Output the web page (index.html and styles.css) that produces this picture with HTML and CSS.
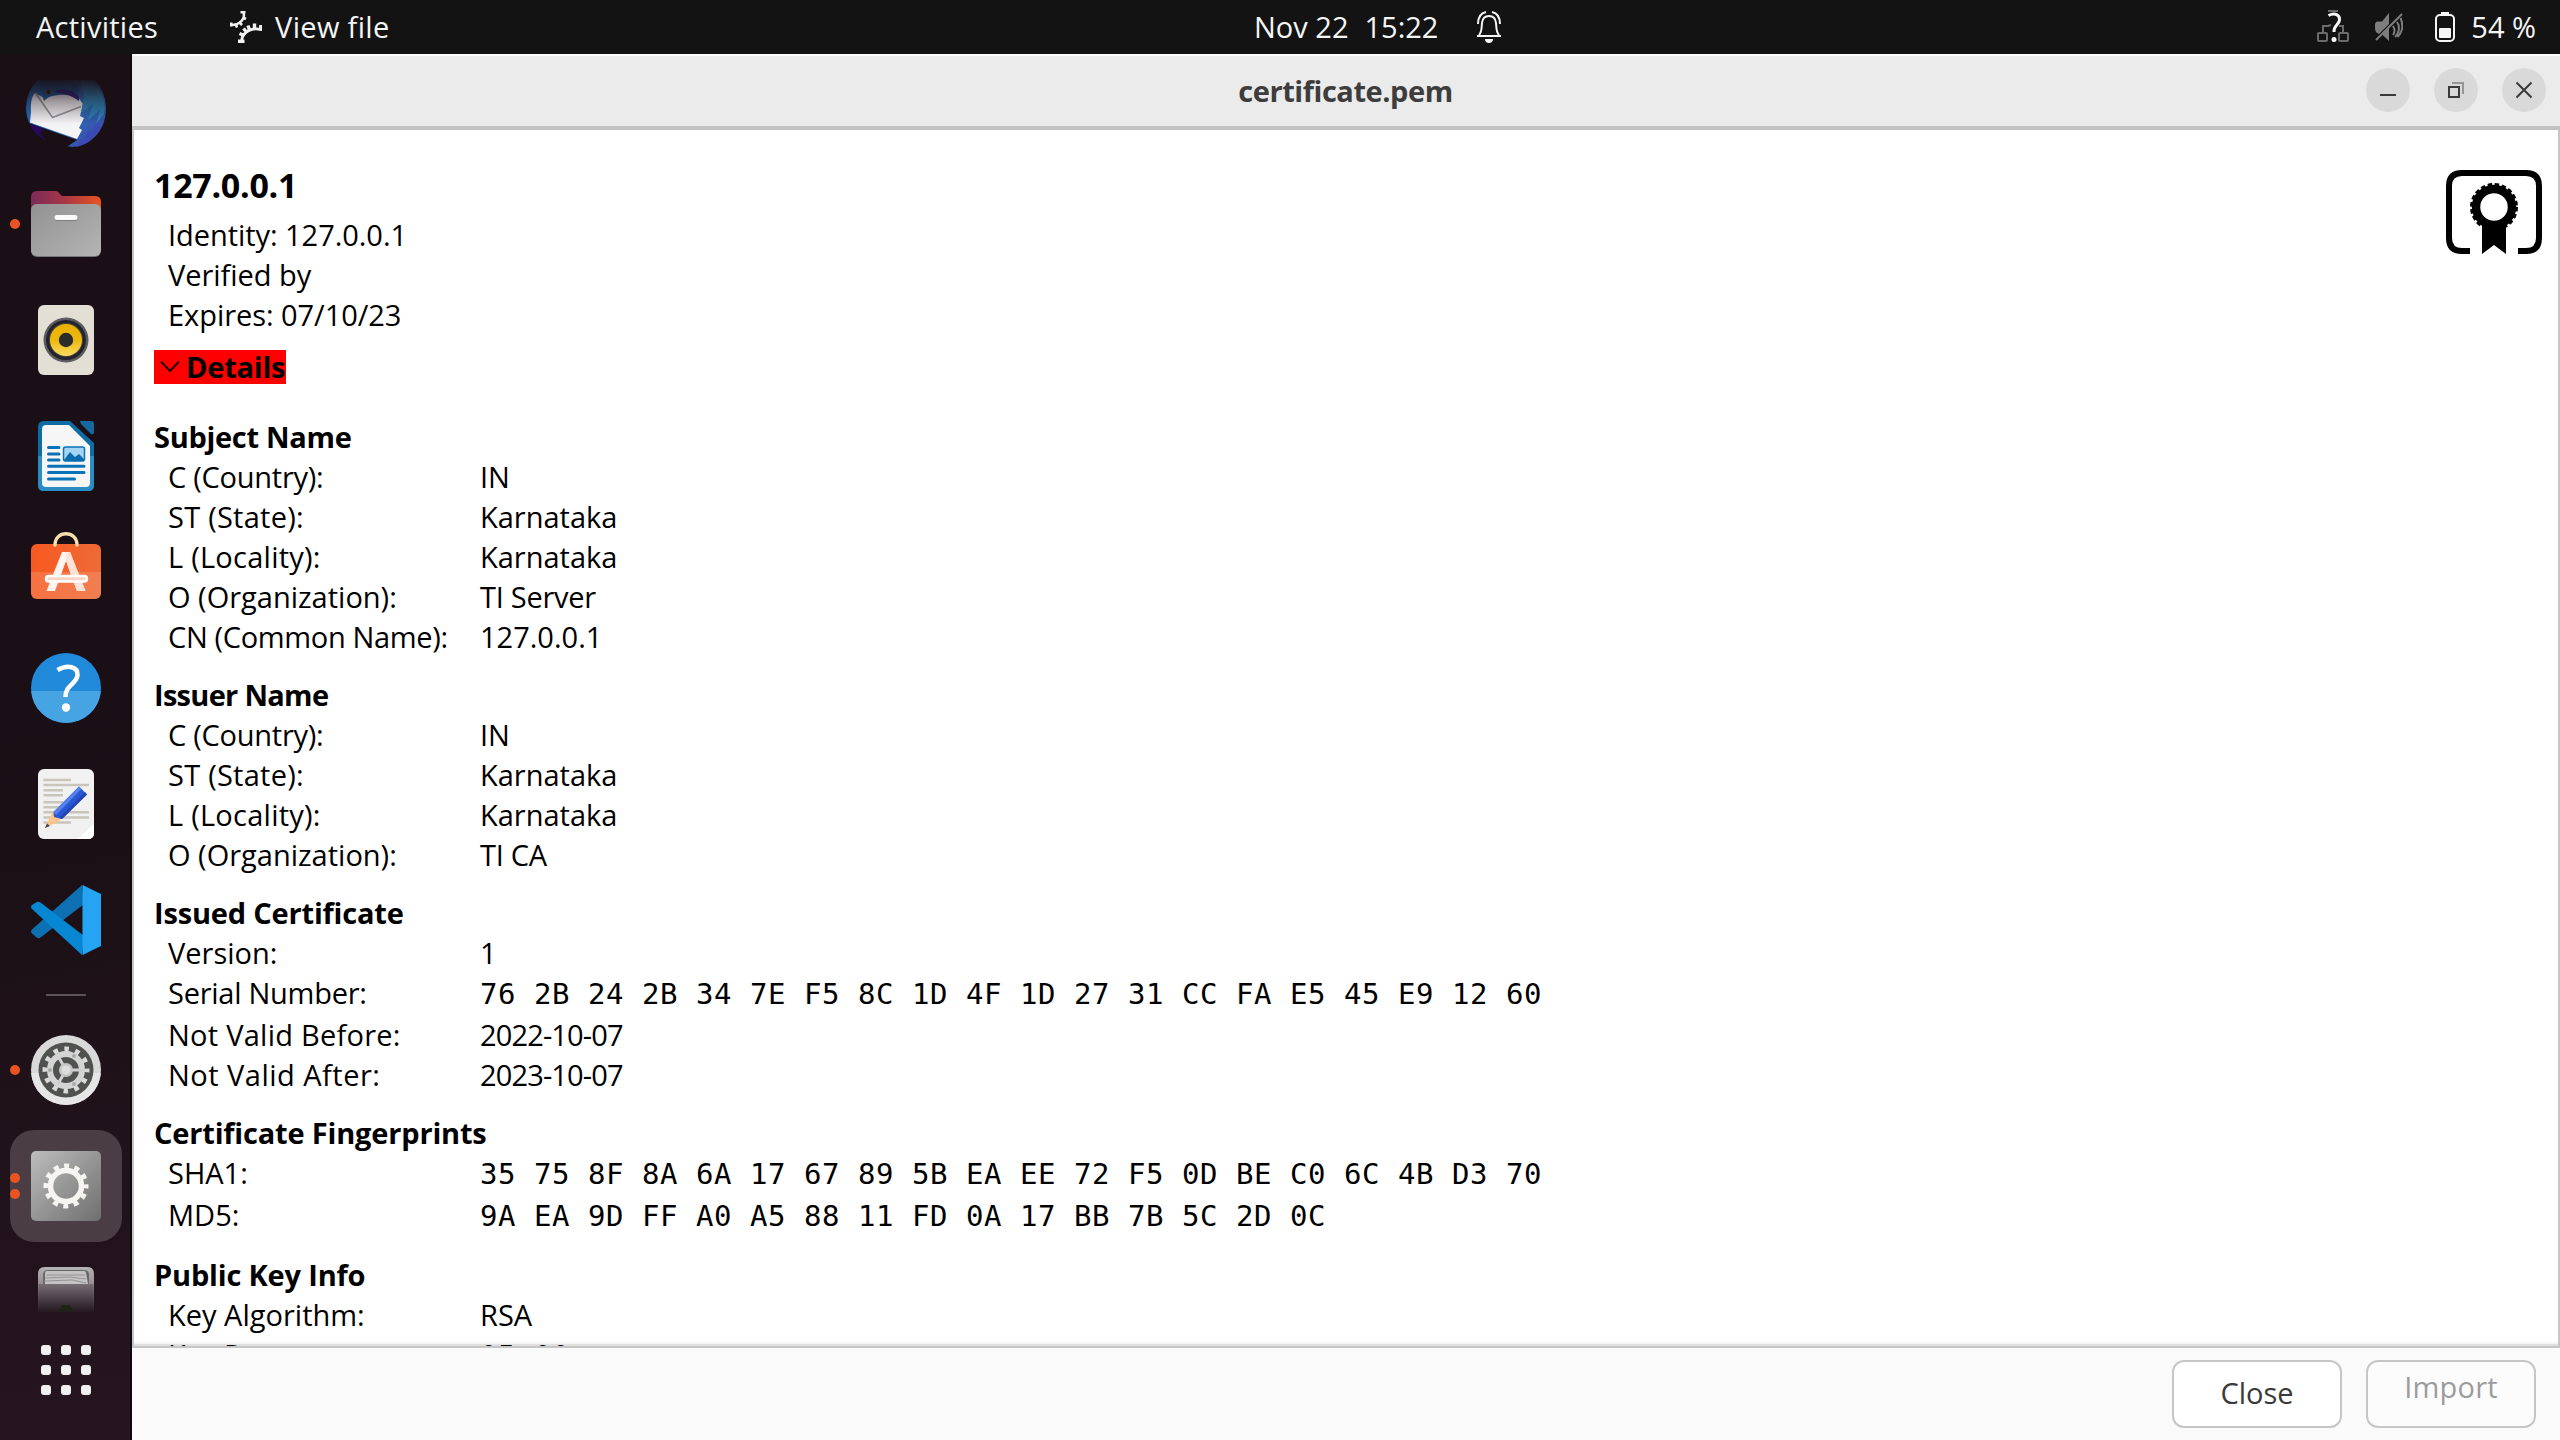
FILE: index.html
```html
<!DOCTYPE html>
<html lang="en">
<head>
<meta charset="utf-8">
<title>certificate.pem</title>
<link rel="stylesheet" href="styles.css">
</head>
<body>
<header class="topbar">
  <div class="topbar-left">
    <span class="activities">Activities</span>
    <svg class="app-gears" width="32" height="32" viewBox="0 0 32 32" fill="none" stroke="#f2f2f2">
      <path d="M13.500 1C15.500 8 10 14 1 14" stroke-width="2.400"/>
      <path d="M10.500 1.300H15.500M13 6.500L16 8M9 11L12 14M5.500 12.500L7 16.500M1.200 11.500V15.500" stroke-width="2.600"/>
      <path d="M11.500 30.500C12 23 18 18 26 17.800L32 18.500" stroke-width="2.800"/>
      <path d="M8 30.200H14.500M9.500 22.500L14 24.500M13.500 17.500L17 21.500M18 14.500L19.500 19M24.500 12.500V18M30.800 14V19.500" stroke-width="3.400"/>
    </svg>
    <span class="app-name">View file</span>
  </div>
  <div class="topbar-clock">
    <span>Nov 22</span><span class="time">15:22</span>
    <svg width="24" height="32" viewBox="0 0 24 32" fill="none" stroke="#f5f5f5" stroke-width="2">
      <path d="M2 24C5 21 4.500 17 5 12C5.500 7 8 5 12 5C16 5 18.500 7 19 12C19.500 17 19 21 22 24"/>
      <path d="M0 25h24"/>
      <path d="M9 1C4 2 1 6 1 13M15 1C20 2 23 6 23 13"/>
      <path d="M8 28h8c0 2.500-1.500 4-4 4s-4-1.500-4-4z" fill="#f5f5f5" stroke="none"/>
    </svg>
  </div>
  <div class="topbar-status">
    <svg width="32" height="34" viewBox="0 0 32 34" fill="none">
      <g stroke="#6b6b6b" stroke-width="2">
        <rect x="1" y="23" width="9" height="8" rx="1"/><rect x="22" y="23" width="9" height="8" rx="1"/>
        <path d="M6 22v-6h5l3-1M26 22v-6h-4M11 1h10"/>
      </g>
      <path d="M11.500 5.500C18 2 23 5 22.500 10C22 15 16.500 15 17 22" stroke="#f5f5f5" stroke-width="3"/>
      <circle cx="17" cy="29.500" r="2.500" fill="#f5f5f5"/>
    </svg>
    <svg class="volume" width="28" height="28" viewBox="0 0 28 28" fill="none" stroke="#7d7d7d" stroke-width="2">
      <path d="M0 12c0-2 1-3.500 3-3.500h4L14 0v11L4 21C1 20 0 18 0 15z" fill="#7d7d7d" stroke="none"/>
      <path d="M7 21.500l7-7V28z" fill="#7d7d7d" stroke="none"/>
      <path d="M1 27L27 1M18 13c2 3 2 6 0 9M22 9c3 4 2.500 11-2 15M25.500 5c3 7 2 14-3 19"/>
    </svg>
    <svg class="battery" width="20" height="30" viewBox="0 0 20 30" fill="none">
      <rect x="1" y="3" width="18" height="26" rx="4" stroke="#f5f5f5" stroke-width="2"/>
      <rect x="6" y="0" width="8" height="3" fill="#f5f5f5"/>
      <rect x="4" y="16" width="12" height="10" rx="1" fill="#f5f5f5"/>
    </svg>
    <span>54 %</span>
  </div>
</header>

<div class="desktop">
  <nav class="dock">
    <div class="dock-list">
      <div class="dock-item">
        <svg width="112" height="112" viewBox="0 0 112 112">
          <defs>
            <linearGradient id="tbBlue" x1="0" y1="0" x2="1" y2="1"><stop offset="0" stop-color="#1d63ad"/><stop offset=".6" stop-color="#2b6db8"/><stop offset="1" stop-color="#3f3fa5"/></linearGradient>
            <linearGradient id="tbFade" x1="0" y1="28" x2="0" y2="72" gradientUnits="userSpaceOnUse"><stop offset="0" stop-color="#1a0f15" stop-opacity=".92"/><stop offset=".5" stop-color="#1a0f15" stop-opacity=".38"/><stop offset="1" stop-color="#1a0f15" stop-opacity="0"/></linearGradient>
            <clipPath id="tbClip"><rect x="10" y="28" width="92" height="70"/></clipPath>
          </defs>
          <g clip-path="url(#tbClip)">
            <path d="M16 56A40 40 0 0 1 96 56C96 76 84 93 62 95L57 94L67 88L20 72L36 88C24 82 16 70 16 56z" fill="url(#tbBlue)"/>
            <path d="M19 71L58 85L67 88L58 94L34 84L36 88C28 84 22 79 19 71z" fill="#1a0f15"/>
            <path d="M20 72L34 77L30 81L36 88C28 84 22 79 20 72z" fill="#28085e"/>
            <path d="M25 41C20 46 21 56 21 60L20 70.500L67 87L72 78L69 76L74 66L70 64L73 52L68 45C56 41 45 43 34 46z" fill="#f4f3f5"/>
            <path d="M25.500 41L42.500 65.500L71 54.500" fill="none" stroke="#98979b" stroke-width="1.600"/>
            <path d="M31 28C29 36 32 42 34 49C42 41 55 39 69 45L68 34L56 26z" fill="#1d5c9e"/>
            <path d="M44 40C52 35 62 37 69 45L69 49C60 42 52 42 44 40z" fill="#33228a"/>
            <path d="M72 36C77 46 70 56 72 60L83 52L78 68L90 58L86 72L94 62C98 44 86 30 72 28z" fill="#2e84ba"/>
            <path d="M66 95L70 87L74 88L78 79L81 81L86 72C90 68 92 74 88 80C82 89 75 93 66 95z" fill="#3b49b4"/>
            <circle cx="38.500" cy="40" r="2.400" fill="#23150f" stroke="#65503f"/>
            <rect x="10" y="14" width="92" height="60" fill="url(#tbFade)"/>
          </g>
        </svg>
      </div>
      <div class="dock-item running">
        <svg width="112" height="112" viewBox="0 0 112 112">
          <defs>
            <linearGradient id="fBack"><stop offset="0" stop-color="#7c2a57"/><stop offset=".45" stop-color="#a33648"/><stop offset="1" stop-color="#e95420"/></linearGradient>
            <linearGradient id="fFront" x1="0" y1="0" x2="1" y2="1"><stop offset="0" stop-color="#929292"/><stop offset="1" stop-color="#b4b4b4"/></linearGradient>
          </defs>
          <path d="M21 46V29q0-6 6-6H46q2 0 3 2l3 3H85q6 0 6 6V46z" fill="url(#fBack)"/>
          <rect x="21" y="36" width="70" height="53" rx="6" fill="#777"/>
          <rect x="21" y="36" width="70" height="52" rx="6" fill="url(#fFront)"/>
          <rect x="44.500" y="48" width="23" height="5" rx="2.500" fill="#7c7c7c"/>
          <rect x="44.500" y="47" width="23" height="5" rx="2.500" fill="#fafafa"/>
        </svg>
      </div>
      <div class="dock-item">
        <svg width="112" height="112" viewBox="0 0 112 112">
          <defs><linearGradient id="rY" x1="0" y1="0" x2="0" y2="1"><stop offset="0" stop-color="#e9b000"/><stop offset=".5" stop-color="#edb90f"/><stop offset="1" stop-color="#f9db62"/></linearGradient></defs>
          <rect x="28" y="21" width="56" height="70" rx="6" fill="#e3dfd5"/>
          <circle cx="56" cy="56" r="22.500" fill="#5c5c5e"/>
          <circle cx="56" cy="56" r="20" fill="#23232f"/>
          <circle cx="56" cy="56" r="17" fill="#4c483a"/>
          <circle cx="56" cy="56" r="16" fill="url(#rY)"/>
          <circle cx="56" cy="56" r="7.200" fill="#2b2b2b"/>
        </svg>
      </div>
      <div class="dock-item">
        <svg width="112" height="112" viewBox="0 0 112 112">
          <path d="M28 27q0-6 6-6H60L84 43V85q0 6-6 6H34q-6 0-6-6z" fill="#0e6ca5"/>
          <path d="M28 56H84V85q0 6-6 6H34q-6 0-6-6z" fill="#2b8cc4"/>
          <path d="M70 21H81q3 0 3 3V33q-1 2-3 1L71 24z" fill="#15699e"/>
          <path d="M32 29q0-4 4-4H59L80 46V83q0 4-4 4H36q-4 0-4-4z" fill="#f6f6f6"/>
          <g stroke="#0a73b7" stroke-width="3" stroke-linecap="round"><path d="M38.500 47.500H49M38.500 54H49M38.500 60H49M38.500 66.300H74M38.500 72.500H74M38.500 79H64.500"/></g>
          <rect x="53.500" y="47" width="21" height="14" rx="2" fill="#a3d4f2" stroke="#0a73b7" stroke-width="1.500"/>
          <path d="M54 60L60 52L65 57L69 54L74 59V61H54z" fill="#0a6cae"/>
        </svg>
      </div>
      <div class="dock-item">
        <svg width="112" height="112" viewBox="0 0 112 112">
          <defs><linearGradient id="sO" x1="0" y1="0" x2="1" y2="0"><stop offset="0" stop-color="#f75a22"/><stop offset="1" stop-color="#ee6a35"/></linearGradient></defs>
          <rect x="21" y="28" width="70" height="55" rx="6" fill="url(#sO)"/>
          <path d="M21 56H91V77q0 6-6 6H27q-6 0-6-6z" fill="#fff" fill-opacity=".14"/>
          <path d="M45 29C45 14 67 14 67 29" fill="none" stroke="#f8dfae" stroke-width="3.400" stroke-linecap="round"/>
          <path d="M52 36H60L75.500 75H67L56 45L45 75H36.500z" fill="#fff5ee"/>
          <path d="M56 36H60L75.500 75H67L56 45z" fill="#fde3d6"/>
          <rect x="36" y="60" width="41" height="5.500" rx="2.700" fill="#fbd5c4" stroke="#fff" stroke-width="2.400"/>
        </svg>
      </div>
      <div class="dock-item">
        <svg width="112" height="112" viewBox="0 0 112 112">
          <circle cx="56" cy="56" r="35" fill="#2189da"/>
          <path d="M21.130 59H90.870A35 35 0 0 1 21.130 59z" fill="#46a4e2"/>
          <path d="M47.500 38C58 32 68 35 67.500 43C67 52 55 53 55.500 65" fill="none" stroke="#fff" stroke-width="4.500"/>
          <circle cx="56" cy="75.500" r="4.200" fill="#fff"/>
        </svg>
      </div>
      <div class="dock-item">
        <svg width="112" height="112" viewBox="0 0 112 112">
          <rect x="28" y="21" width="56" height="70" rx="6" fill="#f1f1f2"/>
          <path d="M84 76V85q0 6-6 6H68z" fill="#fff"/>
          <g stroke="#c9c5ba" stroke-width="2.500"><path d="M33.500 32H61M33.500 37H79M33.500 42.300H53M33.500 47.300H53M33.500 54.300H53M33.500 59.300H50M33.500 64.300H79M33.500 69.500H79M33.500 74.500H61"/></g>
          <path d="M35 80L42 65L44 63L51 70L49 73z" fill="#ffc389"/>
          <path d="M35 80L37 75.500L40 78z" fill="#4a4a4a"/>
          <path d="M69 38.500L77 46.500L52 71L44 69L43.500 64z" fill="#2857d4"/>
          <path d="M69 38.500L71.500 41L46 67L43.500 64z" fill="#5581ec"/>
          <path d="M75 44L77 46.500L52 71L49 70z" fill="#2146b4"/>
        </svg>
      </div>
      <div class="dock-item">
        <svg width="112" height="112" viewBox="0 0 112 112">
          <path d="M72 21L74 40L30.500 73.500Q28 75 26 73L22 69.500Q20 67.500 22 65.500z" fill="#0c70b3"/>
          <path d="M22 45Q20 43 22 41L26 38.500Q28 37 30.500 38.500L74 72L72 91z" fill="#0787d2"/>
          <path d="M72.500 21L91 30V82L72.500 91z" fill="#24a4f2"/>
        </svg>
      </div>
      <hr class="dock-separator">
      <div class="dock-item running">
        <svg width="112" height="112" viewBox="0 0 112 112">
          <circle cx="56" cy="56" r="35" fill="#d9d9d9"/>
          <path d="M21.130 59H90.870A35 35 0 0 1 21.130 59z" fill="#e6e6e6"/>
          <circle cx="56" cy="56" r="27.500" fill="#505250"/>
          <circle cx="56" cy="56" r="21" fill="none" stroke="#dadada" stroke-width="5" stroke-dasharray="4.600 6.396" stroke-dashoffset="2.300"/>
          <circle cx="56" cy="56" r="16" fill="none" stroke="#d4d4d4" stroke-width="6"/>
          <path d="M56 56H73M56 56L47.500 41.300M56 56L47.500 70.700" stroke="#d0d0d0" stroke-width="3"/>
          <circle cx="56" cy="56" r="7" fill="#c6c6c6"/>
          <g fill="#aaa"><circle cx="56" cy="56" r="4.500" fill="#dedede"/><circle cx="40" cy="56" r="2"/><circle cx="64" cy="42" r="2"/><circle cx="64" cy="70" r="2"/></g>
        </svg>
      </div>
      <div class="dock-item active">
        <svg width="112" height="112" viewBox="0 0 112 112">
          <defs><linearGradient id="gG" x1="0" y1="0" x2="1" y2="1"><stop offset="0" stop-color="#bdbdbd"/><stop offset="1" stop-color="#6f6f6f"/></linearGradient></defs>
          <rect x="21" y="21" width="70" height="70" rx="5" fill="url(#gG)"/>
          <circle cx="56" cy="56" r="15.500" fill="none" stroke="#f6f5f2" stroke-width="5.500"/>
          <circle cx="56" cy="56" r="20" fill="none" stroke="#f6f5f2" stroke-width="5" stroke-dasharray="5 5.472" stroke-dashoffset="2.500"/>
        </svg>
      </div>
      <div class="dock-item">
        <svg width="112" height="112" viewBox="0 0 112 112">
          <defs>
            <linearGradient id="trF" x1="0" y1="38" x2="0" y2="66" gradientUnits="userSpaceOnUse"><stop offset="0" stop-color="#766c72"/><stop offset="1" stop-color="#251820"/></linearGradient>
            <linearGradient id="trB" x1="0" y1="21" x2="0" y2="66" gradientUnits="userSpaceOnUse"><stop offset="0" stop-color="#b5b3b4"/><stop offset=".4" stop-color="#948c90"/><stop offset="1" stop-color="#251820"/></linearGradient>
          </defs>
          <path d="M28 66V28q0-7 7-7H77q7 0 7 7V66z" fill="url(#trB)"/>
          <path d="M33 38V29q0-5 5-5H74q5 0 5 5V38z" fill="#69676a"/>
          <path d="M35 38V27q0-2 2-2H74q2 0 2 2l2 11z" fill="#c4c2c3"/>
          <path d="M36 29L75 29M35 32L60 31L76 33M34 35L62 34L76 37" fill="none" stroke="#969496"/>
          <rect x="28.500" y="38" width="55" height="28" fill="url(#trF)"/>
          <path d="M52 59h8l2 4l1 3h-5l-2-3l-2 3h-5l1-3z" fill="#1e2318"/>
        </svg>
      </div>
    </div>
    <div class="app-grid"><i></i><i></i><i></i><i></i><i></i><i></i><i></i><i></i><i></i></div>
  </nav>

  <main class="window">
    <header class="titlebar">
      <h1 class="window-title">certificate.pem</h1>
      <div class="window-controls">
        <svg width="44" height="44" viewBox="0 0 44 44"><circle cx="22" cy="22" r="22"/><path d="M14 27H30"/></svg>
        <svg width="44" height="44" viewBox="0 0 44 44"><circle cx="22" cy="22" r="22"/><path d="M18 15H29V26" class="back"/><rect x="15" y="19" width="10" height="10"/></svg>
        <svg width="44" height="44" viewBox="0 0 44 44"><circle cx="22" cy="22" r="22"/><path d="M14.500 14.500L29.500 29.500M29.500 14.500L14.500 29.500"/></svg>
      </div>
    </header>

    <section class="viewer">
      <div class="certificate">
        <h2 class="cert-name">127.0.0.1</h2>
        <p class="summary">Identity: 127.0.0.1</p>
        <p class="summary">Verified by</p>
        <p class="summary">Expires: 07/10/23</p>
        <div class="details-toggle">
          <svg width="20" height="14" viewBox="0 0 20 14"><path d="M1 1.500L10 11L19 1.500" fill="none" stroke="#200" stroke-width="2"/></svg>
          <span>Details</span>
        </div>

        <section class="group">
          <h3>Subject Name</h3>
          <dl>
            <dt class="snug">C (Country):</dt><dd>IN</dd>
            <dt class="loose">ST (State):</dt><dd>Karnataka</dd>
            <dt class="loose">L (Locality):</dt><dd>Karnataka</dd>
            <dt>O (Organization):</dt><dd class="snug">TI Server</dd>
            <dt class="snugger">CN (Common Name):</dt><dd>127.0.0.1</dd>
          </dl>
        </section>
        <section class="group">
          <h3 class="tight">Issuer Name</h3>
          <dl>
            <dt class="snug">C (Country):</dt><dd>IN</dd>
            <dt class="loose">ST (State):</dt><dd>Karnataka</dd>
            <dt class="loose">L (Locality):</dt><dd>Karnataka</dd>
            <dt>O (Organization):</dt><dd class="snug">TI CA</dd>
          </dl>
        </section>
        <section class="group">
          <h3 class="wide">Issued Certificate</h3>
          <dl>
            <dt>Version:</dt><dd>1</dd>
            <dt class="snug">Serial Number:</dt><dd class="hex">76 2B 24 2B 34 7E F5 8C 1D 4F 1D 27 31 CC FA E5 45 E9 12 60</dd>
            <dt class="loose">Not Valid Before:</dt><dd class="date">2022-10-07</dd>
            <dt class="looser">Not Valid After:</dt><dd class="date">2023-10-07</dd>
          </dl>
        </section>
        <section class="group">
          <h3 class="wide">Certificate Fingerprints</h3>
          <dl>
            <dt>SHA1:</dt><dd class="hex">35 75 8F 8A 6A 17 67 89 5B EA EE 72 F5 0D BE C0 6C 4B D3 70</dd>
            <dt>MD5:</dt><dd class="hex">9A EA 9D FF A0 A5 88 11 FD 0A 17 BB 7B 5C 2D 0C</dd>
          </dl>
        </section>
        <section class="group">
          <h3 class="wide">Public Key Info</h3>
          <dl>
            <dt>Key Algorithm:</dt><dd>RSA</dd>
            <dt>Key Parameters:</dt><dd class="hex">05 00</dd>
          </dl>
        </section>
      </div>
      <svg class="cert-icon" width="96" height="84" viewBox="0 0 96 84">
        <path d="M24 81H16Q3 81 3 68V16Q3 3 16 3H80Q93 3 93 16V68Q93 81 80 81H72" fill="none" stroke="#000" stroke-width="6"/>
        <circle cx="48" cy="37" r="18" fill="none" stroke="#000" stroke-width="8.500"/>
        <circle cx="48" cy="37" r="22.500" fill="none" stroke="#000" stroke-width="3" stroke-dasharray="4.500 2.569"/>
        <path d="M36 54H60V84L48 75L36 84z"/>
      </svg>
      <div class="scroll-shade"></div>
    </section>

    <footer class="actions">
      <button class="button">Close</button>
      <button class="button disabled" disabled>Import</button>
    </footer>
  </main>
</div>
</body>
</html>
```
FILE: styles.css
```css
* { box-sizing: border-box; }
body {
  margin: 0;
  width: 2560px;
  height: 1440px;
  overflow: hidden;
  display: flex;
  flex-direction: column;
  font: 29px/40px "Open Sans", "Noto Sans", sans-serif;
  color: #000;
  background: #1a0f15;
}
h1, h2, h3, p, dl, dd { margin: 0; }
svg { display: block; flex: none; }

/* Top panel */
.topbar {
  height: 54px;
  flex: none;
  display: grid;
  grid-template-columns: 1255px 1fr auto;
  background: #131313;
  color: #f5f5f5;
  line-height: 54px;
}
.topbar-left, .topbar-clock, .topbar-status { display: flex; align-items: center; }
.topbar-left { padding-left: 36px; }
.activities { width: 194px; letter-spacing: 0.26px; }
.app-name { margin-left: 13px; letter-spacing: 0.34px; }
.time { margin: 0 39px 0 16px; }
.topbar-clock > span:first-child { margin-left: -1px; }
.topbar-status { padding-right: 24px; }
.volume { margin-left: 26px; }
.battery { margin: 0 16px 0 32px; }

.desktop { flex: 1; display: flex; min-height: 0; }

/* Dock */
.dock {
  width: 132px;
  flex: none;
  display: flex;
  flex-direction: column;
  background: linear-gradient(170deg, #190f15 0%, #1b0f16 55%, #1f1219 75%, #26151f 100%);
  border-right: 2px solid #0f080c;
}
.dock-list { height: 1262px; overflow: hidden; padding-left: 10px; }
.dock-item {
  position: relative;
  width: 112px;
  height: 112px;
  margin-bottom: 4px;
}
.dock-item:first-child { margin-top: -2px; }
.running::before, .active::before, .active::after {
  content: "";
  position: absolute;
  left: 0;
  top: 51px;
  width: 10px;
  height: 10px;
  border-radius: 50%;
  background: #e95420;
}
.active { background: #4a3e44; border-radius: 24px; }
.active::before { top: 43px; }
.active::after { top: 59px; }
.dock-separator {
  width: 40px;
  height: 2px;
  margin: 18px 0 18px 36px;
  border: 0;
  background: #5d5359;
}
.app-grid {
  display: grid;
  grid-template-columns: repeat(3, 10px);
  gap: 10px;
  margin: 29px 0 0 41px;
}
.app-grid i { height: 10px; border-radius: 3px; background: #f0f0f0; }

/* Window */
.window { flex: 1; display: flex; flex-direction: column; min-width: 0; background: #fff; }
.titlebar {
  height: 76px;
  flex: none;
  display: grid;
  grid-template-columns: 1fr auto 1fr;
  align-items: center;
  padding: 0 14px 0 0;
  background: #ebebeb;
  border-top: 2px solid #fcfcfc;
  border-bottom: 4px solid #c2c2c2;
}
.window-title {
  grid-column: 2;
  font-size: 29px;
  font-weight: 700;
  letter-spacing: -0.44px;
  color: #3d3d3d;
  margin-left: 13px;
}
.window-controls { display: flex; gap: 24px; justify-content: flex-end; margin-bottom: 2px; }
.window-controls circle { fill: #d9d9d9; }
.window-controls path, .window-controls rect { fill: none; stroke: #3a3a3a; stroke-width: 2; }
.window-controls .back { stroke: #969696; }

.viewer {
  position: relative;
  flex: 1;
  min-height: 0;
  overflow: hidden;
  display: flex;
  align-items: flex-start;
  justify-content: space-between;
  padding: 32px 16px 0 20px;
  border: solid #c6c6c6;
  border-width: 0 2px 2px;
}
.cert-name { font-size: 34px; line-height: 47px; height: 53px; letter-spacing: -0.29px; }
.summary { margin-left: 14px; letter-spacing: -0.05px; }
.details-toggle {
  display: flex;
  align-items: center;
  gap: 6px;
  width: 132px;
  height: 34px;
  margin-top: 15px;
  padding-left: 6px;
  line-height: 34px;
  font-weight: 700;
  letter-spacing: -0.23px;
  background: #f00;
}
.group { margin-top: 18px; }
.details-toggle + .group { margin-top: 33px; }
.group h3 { font-size: 29px; font-weight: 700; letter-spacing: -0.3px; height: 40px; }
.group h3.wide { letter-spacing: -0.18px; }
.group h3.tight { letter-spacing: -0.7px; }
.group dl { display: grid; grid-template-columns: 311px auto; padding-left: 14px; justify-content: start; }
.group dd { padding-left: 1px; }
.hex { font: 29px/42px "DejaVu Sans Mono", monospace; letter-spacing: 0.54px; white-space: pre; }
.loose { letter-spacing: 0.25px; }
.looser { letter-spacing: 0.48px; }
.snug { letter-spacing: -0.26px; }
.snugger { letter-spacing: -0.35px; }
.date { letter-spacing: -0.86px; }
.cert-icon { margin-top: 8px; }
.scroll-shade {
  position: absolute;
  left: 0;
  right: 0;
  bottom: 0;
  height: 4px;
  background: linear-gradient(rgba(0,0,0,.04) 50%, rgba(0,0,0,.12) 50%);
}

.actions {
  height: 92px;
  flex: none;
  display: flex;
  justify-content: flex-end;
  gap: 24px;
  padding: 12px 24px 0 0;
  background: #fafafa;
}
.button {
  width: 170px;
  height: 68px;
  padding: 0 0 2px;
  font: inherit;
  line-height: 62px;
  color: #3a3a3a;
  background: #fff;
  border: 2px solid #c6c6c6;
  border-radius: 12px;
}
.button.disabled { color: #9c9c9c; background: #fcfcfc; padding-bottom: 14px; line-height: 50px; letter-spacing: 0.2px; }
```
